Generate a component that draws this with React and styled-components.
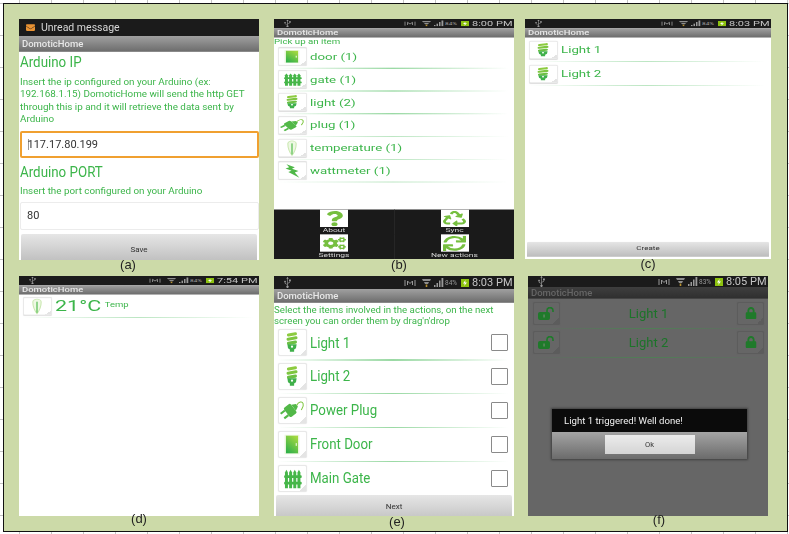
import React from "react";
import styled, { createGlobalStyle } from "styled-components";
import { FaQuestion, FaRecycle, FaCogs, FaSync, FaLock, FaEnvelope, FaUsb } from "react-icons/fa";

const Global = createGlobalStyle`
  html, body { margin: 0; padding: 0; background: #fff; }
  * { box-sizing: border-box; }
`;

const GREEN = "#3cb54a";

const Page = styled.div`
  width: 789px;
  height: 534px;
  overflow: hidden;
  padding: 3px 0 0 3px;
  background-color: #fff;
  background-image:
    repeating-linear-gradient(90deg, transparent 0 19px, #c4c4c4 19px 20px, transparent 20px 32px),
    repeating-linear-gradient(0deg, transparent 0 18px, #c4c4c4 18px 19px, transparent 19px 32px);
  font-family: Roboto, "Liberation Sans", sans-serif;
`;

const Frame = styled.div`
  width: 785px;
  height: 529px;
  border: 1px solid #111;
  background: #ccdaa8;
  padding: 15px 0 0 15px;
  display: grid;
  grid-template-columns: 255px 251px 246px;
  grid-template-rows: 257px 240px;
`;

const Cell = styled.div`
  display: flex;
  flex-direction: column;
  align-items: flex-start;
`;

const Phone = styled.section`
  position: relative;
  width: ${(p) => p.$w || 240}px;
  height: ${(p) => p.$h || 240}px;
  margin-left: ${(p) => p.$ml || 0}px;
  background: ${(p) => p.$bg || "#fff"};
  overflow: hidden;
  flex: none;
  filter: blur(0.35px);
  display: flex;
  flex-direction: column;
`;

const Squash = styled.div`
  width: 100%;
  height: 360px;
  flex: none;
  transform: scaleY(0.6667);
  transform-origin: top left;
  display: flex;
  flex-direction: column;
`;

const Caption = styled.div`
  position: relative;
  z-index: 1;
  width: 240px;
  height: 14px;
  margin-top: ${(p) => p.$mt}px;
  margin-left: ${(p) => p.$ml || 0}px;
  transform: translateX(${(p) => p.$shift}px);
  text-align: center;
  font: 13px/14px "Liberation Sans", Arial, sans-serif;
  color: #222;
  filter: blur(0.3px);
`;

const Status = styled.div`
  height: ${(p) => p.$h}px;
  flex: none;
  background: #1b1b1b;
  display: flex;
  align-items: center;
  padding: 0 4px 0 8px;
  color: #bdbdbd;
`;

const UsbMark = styled(FaUsb)`
  width: 11px;
  height: 11px;
  color: #9a9a9a;
  transform: rotate(-90deg);
`;

const StatusRight = styled.div`
  margin-left: auto;
  display: flex;
  align-items: center;
`;

const Percent = styled.span`
  font-size: 6.5px;
  width: 14px;
  margin: 0 2px 0 1px;
  color: #9a9a9a;
`;

const Clock = styled.span`
  font-size: 11px;
  width: 38px;
  text-align: right;
  margin-left: 3px;
  color: #c4c4c4;
  white-space: nowrap;
`;

const StatusGlyph = styled.span`
  display: flex;
  margin-right: ${(p) => p.$mr || 0}px;
`;

const Unread = styled.div`
  height: 16.5px;
  flex: none;
  background: #1b1b1b;
  display: flex;
  align-items: center;
  gap: 6px;
  padding-left: 7px;
  color: #d8d8d8;
  font-size: 10.5px;
`;

const MailMark = styled(FaEnvelope)`
  width: 9px;
  height: 9px;
  color: #ea9333;
`;

const TitleBar = styled.div`
  height: ${(p) => p.$h}px;
  flex: none;
  background: ${(p) => (p.$dim ? "linear-gradient(#3f3f3f, #2f2f2f)" : "linear-gradient(#a0a0a0, #6e6e6e)")};
  border-bottom: 1px solid ${(p) => (p.$dim ? "#444" : "#8a8a8a")};
  display: flex;
  align-items: center;
  padding-left: 3px;
  color: ${(p) => (p.$dim ? "#666" : "#e8e8e8")};
  font-size: 9.5px;
  font-weight: 500;
`;

const Heading = styled.h2`
  margin: ${(p) => p.$mt || 0}px 0 0 1px;
  font-size: 15px;
  line-height: 20px;
  font-weight: 400;
  color: ${GREEN};
  transform: scaleX(0.89);
  transform-origin: left center;
`;

const Para = styled.p`
  margin: ${(p) => p.$mt || 0}px 0 0 1px;
  font-size: 9.85px;
  line-height: 12.5px;
  color: ${GREEN};
`;

const Field = styled.div`
  height: ${(p) => p.$h}px;
  flex: none;
  margin: ${(p) => p.$mt}px 0 0 ${(p) => (p.$focus ? 0.5 : 1)}px;
  border: ${(p) => (p.$focus ? "2px solid #f0a030" : "1px solid #ececec")};
  border-radius: 2px;
  display: flex;
  align-items: center;
  padding-left: 6px;
  font-size: 11px;
  color: #333;
`;

const Caret = styled.span`
  width: 1px;
  height: 11px;
  background: #999;
  margin-right: -1px;
`;

const ActionButton = styled.div`
  height: ${(p) => p.$h}px;
  flex: none;
  margin: auto 2px ${(p) => p.$mb || 0}px;
  padding-top: ${(p) => p.$pt}px;
  border-radius: 2px 2px 0 0;
  background: linear-gradient(#e6e6e6, #bdbdbd);
  border-bottom: 1px solid #a8a8a8;
  text-align: center;
  font-size: 8px;
  line-height: 10px;
  color: #333;
`;

const Spacer = styled.div`
  height: ${(p) => p.$h}px;
  flex: none;
`;

const Prompt = styled.div`
  margin: 1px 0 0;
  font-size: 9.7px;
  line-height: 11px;
  color: ${GREEN};
`;

const List = styled.div`
  padding-top: ${(p) => p.$top}px;
  display: flex;
  flex-direction: column;
  flex: none;
`;

const Item = styled.div`
  height: ${(p) => p.$pitch || 34.2}px;
  flex: none;
  padding: 0 6px 0 4px;
`;

const ItemBody = styled.div`
  height: 27px;
  display: flex;
  align-items: center;
  gap: 3.5px;
`;

const Divider = styled.div`
  height: 1.5px;
  margin-top: 3px;
  background: linear-gradient(90deg, transparent, #9ad9a4 50%, transparent);
`;

const IconBox = styled.div`
  position: relative;
  width: ${(p) => p.$w || 28.5}px;
  height: ${(p) => p.$h || 27}px;
  flex: none;
  background: ${(p) => (p.$dim ? "#666" : "#fff")};
  border: 1px solid ${(p) => (p.$dim ? "#5c5c5c" : "#e8e8e8")};
  border-radius: 2px;
  box-shadow: 0 0 1px ${(p) => (p.$dim ? "#5a5a5a" : "#ddd")};
  display: flex;
  align-items: center;
  justify-content: center;
  &::after {
    content: "";
    position: absolute;
    right: 0;
    bottom: 0;
    width: 6px;
    height: 6px;
    background: linear-gradient(135deg, transparent 50%, ${(p) => (p.$dim ? "#5c5c5c" : "#e4e4e4")} 50%);
  }
  svg { display: block; }
`;

const ItemLabel = styled.span`
  font-size: 14px;
  color: ${GREEN};
  white-space: nowrap;
  transform: scaleX(0.95);
  transform-origin: left center;
`;

const TempValue = styled.span`
  font-size: 21.5px;
  color: ${GREEN};
`;

const TempUnit = styled.span`
  font-size: 9.5px;
  margin: 0 0 5px 0;
  color: ${GREEN};
`;

const Check = styled.span`
  margin-left: auto;
  width: 17px;
  height: 17px;
  border: 1.5px solid #8a8a8a;
  border-radius: 1px;
  background: #fff;
`;

const Menu = styled.div`
  margin-top: auto;
  height: 75px;
  flex: none;
  background: #1a1a1a;
  border-top: 1px solid #c9c9c9;
  display: grid;
  grid-template-columns: 1fr 1fr;
  grid-template-rows: 1fr 1fr;
`;

const MenuCell = styled.div`
  display: flex;
  flex-direction: column;
  align-items: center;
  border-left: ${(p) => (p.$right ? "1px solid #262626" : "0")};
`;

const MenuTile = styled.div`
  width: 28px;
  height: 26px;
  flex: none;
  background: #fff;
  display: flex;
  align-items: center;
  justify-content: center;
  color: #76bf3f;
  svg { width: 23px; height: 23px; display: block; }
`;

const MenuLabel = styled.span`
  font-size: 8.5px;
  line-height: 11px;
  color: #d5d5d5;
  white-space: nowrap;
`;

const DimRow = styled.div`
  height: 29px;
  flex: none;
  padding: 0 4px 0 5px;
`;

const DimBody = styled.div`
  height: 22.5px;
  display: flex;
  align-items: center;
`;

const DimLabel = styled.span`
  flex: 1;
  text-align: center;
  font-size: 13px;
  color: #1c7429;
`;

const DimDivider = styled.div`
  height: 1px;
  margin-top: 3px;
  background: linear-gradient(90deg, transparent, #4f7f55 50%, transparent);
`;

const DimList = styled.div`
  padding-top: 3px;
`;

const LockTile = styled.span`
  color: #1f7a2a;
  display: flex;
  svg { width: 12px; height: 12px; display: block; }
`;

const OpenTile = styled(LockTile)`
  svg { width: 17px; height: 13px; }
`;

const Dialog = styled.div`
  position: absolute;
  left: 24px;
  top: 133px;
  width: 195px;
  height: 50px;
  box-shadow: 0 0 2px 1px #3f3f3f;
  display: flex;
  flex-direction: column;
`;

const DialogHead = styled.div`
  height: 23px;
  flex: none;
  background: #0b0b0b;
  color: #f0f0f0;
  font-size: 9.6px;
  padding-left: 12px;
  display: flex;
  align-items: center;
`;

const DialogFoot = styled.div`
  flex: 1;
  background: linear-gradient(#a4a4a4, #6b6b6b);
  display: flex;
  justify-content: center;
  padding-top: 3px;
`;

const DialogButton = styled.div`
  width: 90px;
  height: 19px;
  background: linear-gradient(#ececec, #d4d4d4);
  font-size: 7.5px;
  color: #333;
  display: flex;
  align-items: center;
  justify-content: center;
`;

/* ---------- drawn icons ---------- */

const Door = () => (
  <svg width="26" height="25" viewBox="0 0 28 27">
    <defs>
      <linearGradient id="doorFill" x1="0.8" y1="0" x2="0.2" y2="1">
        <stop offset="0" stopColor="#a6d93f" />
        <stop offset="1" stopColor="#2fb04a" />
      </linearGradient>
    </defs>
    <rect x="6" y="3" width="16" height="21" fill="#eaf6dc" />
    <rect x="7.5" y="4" width="13" height="19" fill="url(#doorFill)" />
    <rect x="18" y="12" width="1.2" height="3" fill="#eaf6dc" />
  </svg>
);

const Gate = () => (
  <svg width="26" height="25" viewBox="0 0 28 27" fill="#46b649">
    {[8, 12.5, 17, 21.5].map((x) => (
      <polygon key={x} points={`${x - 1.6},7 ${x},4 ${x + 1.6},7 ${x + 1.6},24 ${x - 1.6},24`} />
    ))}
    <rect x="5.5" y="10" width="19" height="3" rx="1" />
    <rect x="5.5" y="17" width="19" height="3" rx="1" />
  </svg>
);

const Bulb = () => (
  <svg width="26" height="25" viewBox="0 0 28 27">
    <rect x="8.5" y="3" width="11" height="3.4" rx="1.7" fill="#8ccb3f" transform="rotate(-10 14 5)" />
    <rect x="8" y="7.5" width="12" height="3.4" rx="1.7" fill="#7ec640" transform="rotate(-10 14 9)" />
    <rect x="8.5" y="12" width="11" height="3.4" rx="1.7" fill="#6cc043" transform="rotate(-10 14 14)" />
    <path d="M9 15.5h10l-.7 4.2-2 1.3v2.6h-4.6V21l-2-1.3z" fill="#3fb04a" />
    <circle cx="14" cy="18" r="1.2" fill="#fff" />
  </svg>
);

const Plug = () => (
  <svg width="26" height="25" viewBox="0 0 28 27">
    <g transform="translate(-1.5 -2) scale(1.15) rotate(-38 11 14)" fill="#52b848">
      <rect x="8" y="8.5" width="8" height="11" rx="1.5" />
      <path d="M16 10.5l4 2v3l-4 2z" />
      <rect x="3" y="10" width="5" height="2" />
      <rect x="3" y="15.5" width="5" height="2" />
    </g>
    <path d="M19 8c2-4 6-5 7-2s-1 5-2 7" fill="none" stroke="#7ec640" strokeWidth="1.1" />
  </svg>
);

const Thermo = () => (
  <svg width="26" height="25" viewBox="0 0 28 27">
    <path d="M9.5 6.5a4.5 4.5 0 0 1 9 0c0 6-1.5 13-4.5 19-3-6-4.5-13-4.5-19z" fill="#eef8e4" stroke="#cbe8b2" strokeWidth="1.2" />
    <rect x="13.3" y="6" width="1.4" height="18" fill="#5fc05a" />
  </svg>
);

const Bolt = () => (
  <svg width="26" height="25" viewBox="0 0 28 27">
    <polygon points="8,3 17,8 14,10.5 21,14 17,16.5 22,25 10,15.5 13.5,13.5 7,10 11,8" fill="#4fb848" />
  </svg>
);

const OpenLock = () => (
  <svg viewBox="0 0 17 13">
    <rect x="0" y="5" width="12" height="8" rx="2" fill="#1f7a2a" />
    <path d="M9 5V3.6a3 3 0 0 1 6 0V5" fill="none" stroke="#1f7a2a" strokeWidth="1.6" />
    <rect x="5.4" y="7.5" width="1.3" height="3" fill="#6a8a6a" />
  </svg>
);

const SimBox = () => (
  <svg width="12" height="8" viewBox="0 0 12 8" fill="none" stroke="#9a9a9a" strokeWidth="1">
    <path d="M1 1v6M11 1v6M3.5 6V2l2.5 2.5L8.5 2v4" />
  </svg>
);

const Wifi = () => (
  <svg width="9" height="9" viewBox="0 0 9 9" fill="#8d8d8d">
    <polygon points="0,1 9,1 8,3 1,3" />
    <polygon points="2,4 7,4 6,6 3,6" />
    <rect x="3.7" y="6.5" width="1.6" height="2.5" fill="#b8912e" />
  </svg>
);

const Signal = () => (
  <svg width="10" height="9" viewBox="0 0 10 9" fill="#9a9a9a">
    <rect x="0" y="7" width="1.5" height="2" />
    <rect x="2.5" y="5" width="1.5" height="4" />
    <rect x="5" y="2.5" width="1.5" height="6.5" />
    <rect x="7.5" y="0" width="1.8" height="9" />
  </svg>
);

const Battery = () => (
  <svg width="8" height="8" viewBox="0 0 8 8">
    <rect width="8" height="8" fill="#8dc20f" />
    <polygon points="4.5,1 2,4.5 3.8,4.5 3.2,7 6,3.4 4.2,3.4" fill="#fff" />
  </svg>
);

const StatusLine = ({ h, level = "84%", time }) => (
  <Status $h={h}>
    <UsbMark />
    <StatusRight>
      <StatusGlyph $mr={6}><SimBox /></StatusGlyph>
      <StatusGlyph $mr={3}><Wifi /></StatusGlyph>
      <Signal />
      <Percent>{level}</Percent>
      <Battery />
      <Clock>{time}</Clock>
    </StatusRight>
  </Status>
);

const ListRow = ({ icon, children, pitch, last }) => (
  <Item $pitch={pitch}>
    <ItemBody>
      <IconBox>{icon}</IconBox>
      {children}
    </ItemBody>
    {!last && <Divider />}
  </Item>
);

const items = [
  [<Door />, "door (1)"],
  [<Gate />, "gate (1)"],
  [<Bulb />, "light (2)"],
  [<Plug />, "plug (1)"],
  [<Thermo />, "temperature (1)"],
  [<Bolt />, "wattmeter (1)"],
];

const choices = [
  [<Bulb />, "Light 1"],
  [<Bulb />, "Light 2"],
  [<Plug />, "Power Plug"],
  [<Door />, "Front Door"],
  [<Gate />, "Main Gate"],
];

const menu = [
  [<FaQuestion />, "About"],
  [<FaRecycle />, "Sync"],
  [<FaCogs />, "Settings"],
  [<FaSync />, "New actions"],
];

const DimItem = ({ label }) => (
  <DimRow>
    <DimBody>
      <IconBox $dim $w={27} $h={22.5}><OpenTile><OpenLock /></OpenTile></IconBox>
      <DimLabel>{label}</DimLabel>
      <IconBox $dim $w={27} $h={22.5}><LockTile><FaLock /></LockTile></IconBox>
    </DimBody>
    <DimDivider />
  </DimRow>
);

export default function App() {
  return (
    <Page>
      <Global />
      <Frame>
        <Cell>
          <Phone $h={241}>
            <Unread><MailMark />Unread message</Unread>
            <TitleBar $h={16.5}>DomoticHome</TitleBar>
            <Heading>Arduino IP</Heading>
            <Para $mt={3.7}>
              Insert the ip configured on your Arduino (ex: 192.168.1.15) DomoticHome will send the http GET through this ip and it will retrieve the data sent by Arduino
            </Para>
            <Field $focus $h={27} $mt={5}><Caret />117.17.80.199</Field>
            <Heading $mt={4}>Arduino PORT</Heading>
            <Para $mt={3.7}>Insert the port configured on your Arduino</Para>
            <Field $h={28} $mt={4}>80</Field>
            <Spacer $h={4} />
            <ActionButton $h={30} $pt={11}>Save</ActionButton>
          </Phone>
          <Caption $mt={-2} $shift={-11}>(a)</Caption>
        </Cell>

        <Cell>
          <Phone>
            <Squash>
              <StatusLine h={13.5} time="8:00 PM" />
              <TitleBar $h={14}>DomoticHome</TitleBar>
              <Prompt>Pick up an item</Prompt>
              <List $top={3.5}>
                {items.map(([icon, label]) => (
                  <ListRow key={label} icon={icon}><ItemLabel>{label}</ItemLabel></ListRow>
                ))}
              </List>
              <Menu>
                {menu.map(([icon, label], i) => (
                  <MenuCell key={label} $right={i % 2 === 1}>
                    <MenuTile>{icon}</MenuTile>
                    <MenuLabel>{label}</MenuLabel>
                  </MenuCell>
                ))}
              </Menu>
            </Squash>
          </Phone>
          <Caption $mt={-1} $shift={5}>(b)</Caption>
        </Cell>

        <Cell>
          <Phone $w={246}>
            <Squash>
              <StatusLine h={13.5} time="8:03 PM" />
              <TitleBar $h={14}>DomoticHome</TitleBar>
              <List $top={5}>
                <ListRow icon={<Bulb />} pitch={36}><ItemLabel>Light 1</ItemLabel></ListRow>
                <ListRow icon={<Bulb />} pitch={36}><ItemLabel>Light 2</ItemLabel></ListRow>
              </List>
              <ActionButton $h={23} $mb={3.5} $pt={6}>Create</ActionButton>
            </Squash>
          </Phone>
          <Caption $mt={-2} $ml={3} $shift={0}>(c)</Caption>
        </Cell>

        <Cell>
          <Phone>
            <Squash>
              <StatusLine h={13.5} time="7:54 PM" />
              <TitleBar $h={14}>DomoticHome</TitleBar>
              <List $top={4}>
                <ListRow icon={<Thermo />}>
                  <TempValue>21°C</TempValue>
                  <TempUnit>Temp</TempUnit>
                </ListRow>
              </List>
            </Squash>
          </Phone>
          <Caption $mt={-4} $shift={0}>(d)</Caption>
        </Cell>

        <Cell>
          <Phone>
            <StatusLine h={13} time="8:03 PM" />
            <TitleBar $h={14}>DomoticHome</TitleBar>
            <Prompt>Select the items involved in the actions, on the next screen you can order them by drag'n'drop</Prompt>
            <List $top={3}>
              {choices.map(([icon, label], i) => {
                const last = i === choices.length - 1;
                return (
                  <ListRow key={label} icon={icon} pitch={last ? 30 : 33.9} last={last}>
                    <ItemLabel>{label}</ItemLabel>
                    <Check />
                  </ListRow>
                );
              })}
            </List>
            <ActionButton $h={30} $pt={7}>Next</ActionButton>
          </Phone>
          <Caption $mt={-1} $shift={3}>(e)</Caption>
        </Cell>

        <Cell>
          <Phone $bg="#666" $ml={3}>
            <StatusLine h={11} level="83%" time="8:05 PM" />
            <TitleBar $dim $h={12}>DomoticHome</TitleBar>
            <DimList>
              <DimItem label="Light 1" />
              <DimItem label="Light 2" />
            </DimList>
            <Dialog>
              <DialogHead>Light 1 triggered! Well done!</DialogHead>
              <DialogFoot><DialogButton>Ok</DialogButton></DialogFoot>
            </Dialog>
          </Phone>
          <Caption $mt={-3} $ml={3} $shift={11}>(f)</Caption>
        </Cell>
      </Frame>
    </Page>
  );
}
